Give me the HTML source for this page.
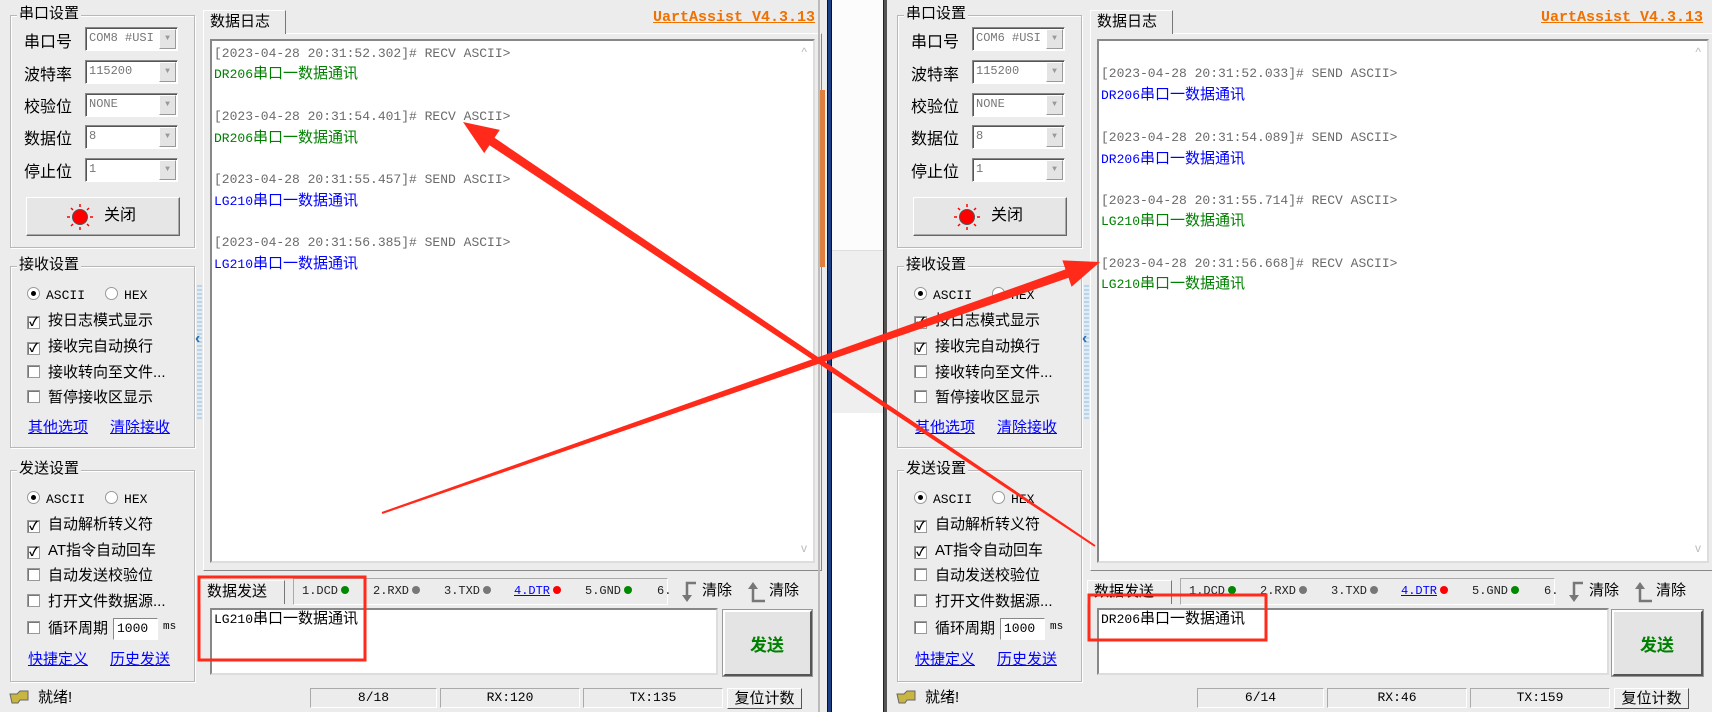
<!DOCTYPE html>
<html><head><meta charset="utf-8">
<style>
*{margin:0;padding:0;box-sizing:border-box}
body{width:1712px;height:712px;overflow:hidden;background:#fff;position:relative;font-family:"Liberation Sans","Noto Sans CJK SC",sans-serif;color:#000}
.a{position:absolute}
.win{position:absolute;top:0;height:712px;background:#ececec;overflow:hidden}
.gb{position:absolute;left:10px;width:185px;border:1px solid #b8b8b8;box-shadow:inset 1px 1px 0 #fff,1px 1px 0 #fff}
.gt{position:absolute;left:6px;top:-12px;background:#ececec;font-size:15px;line-height:20px;padding:0 2px}
.lbl{position:absolute;left:24px;font-size:16px;line-height:22px}
.cb{position:absolute;left:85px;width:93px;height:24px;background:#fff;border:1px solid #888;border-right-color:#fff;border-bottom-color:#fff;box-shadow:inset 1px 1px 0 #555;font-family:"Liberation Mono",monospace;font-size:12px;color:#777;line-height:21px;padding-left:3px;overflow:hidden;white-space:nowrap}
.cb i{position:absolute;right:1px;top:1px;width:17px;height:20px;background:#e4e4e4;border:1px solid #fff;border-right-color:#999;border-bottom-color:#999;font-style:normal;font-size:8px;color:#999;text-align:center;line-height:18px}
.row{position:absolute;left:27px;font-size:15px;line-height:20px;white-space:nowrap}
.chk{display:inline-block;width:13px;height:13px;background:#fff;border:1px solid #999;box-shadow:inset 1px 1px 0 #777;vertical-align:-1px;margin-right:8px;font-size:12px;line-height:11px;text-align:center;font-weight:bold}
.rad{display:inline-block;width:13px;height:13px;background:#fff;border:1px solid #999;border-radius:50%;vertical-align:-1px;margin-right:6px;position:relative}
.rad.on:after{content:"";position:absolute;left:3px;top:3px;width:5px;height:5px;border-radius:50%;background:#000}
.mono{font-family:"Liberation Mono",monospace;font-size:13px}
.lnk{position:absolute;font-size:15px;color:#0000ff;text-decoration:underline;line-height:20px}
.log{position:absolute;left:210px;top:39px;width:605px;height:524px;background:#fff;border:2px solid #888;border-right-color:#ddd;border-bottom-color:#ddd}
.ln{position:absolute;left:2px;font-family:"Liberation Mono",monospace;font-size:13px;line-height:18px;white-space:nowrap}
.ln b{font-weight:normal;font-family:"Liberation Sans","Noto Sans CJK SC",sans-serif;font-size:15px}
.ts{color:#6a6a6a}
.g{color:#008000}.bl{color:#0000ff}
.tab{position:absolute;background:#ececec;border:1px solid #fff;border-right-color:#777;border-bottom:none;font-size:15px;line-height:22px;padding-left:6px}
.seg{position:absolute;top:688px;height:20px;border:1px solid #aaa;border-right-color:#fff;border-bottom-color:#fff;font-family:"Liberation Mono",monospace;font-size:13px;text-align:center;line-height:18px}
.pin{position:absolute;top:583px;font-family:"Liberation Mono",monospace;font-size:12px;line-height:16px;color:#222;white-space:nowrap}
.dot{display:inline-block;width:8px;height:8px;border-radius:50%;margin-left:3px;vertical-align:0}
.title{position:absolute;top:9px;font-family:"Liberation Mono",monospace;font-weight:bold;font-size:15px;color:#f07000;text-decoration:underline}
</style></head><body>

<div class="a" style="left:832px;top:0;width:55px;height:250px;background:#fcfcfc"></div>
<div class="a" style="left:832px;top:250px;width:55px;height:163px;background:#efefef;border-top:1px solid #ddd"></div>
<div class="a" style="left:832px;top:413px;width:55px;height:299px;background:#fff"></div>

<!-- ===== LEFT WINDOW ===== -->
<div class="win" style="left:0;width:828px">
  <div class="gb" style="top:15px;height:233px"><div class="gt">串口设置</div></div>
  <div class="lbl" style="top:32px">串口号</div>
  <div class="lbl" style="top:65px">波特率</div>
  <div class="lbl" style="top:97px">校验位</div>
  <div class="lbl" style="top:129px">数据位</div>
  <div class="lbl" style="top:162px">停止位</div>
  <div class="cb" style="top:27px">COM8 #USI<i>▼</i></div>
  <div class="cb" style="top:60px">115200<i>▼</i></div>
  <div class="cb" style="top:93px">NONE<i>▼</i></div>
  <div class="cb" style="top:125px">8<i>▼</i></div>
  <div class="cb" style="top:158px">1<i>▼</i></div>
  <div class="a" style="left:26px;top:197px;width:154px;height:39px;border:1px solid #fff;border-right-color:#666;border-bottom-color:#666;box-shadow:inset -1px -1px 0 #aaa;background:#e6e6e6"></div>
  <svg class="a" style="left:66px;top:203px" width="28" height="28" viewBox="0 0 28 28"><circle cx="14" cy="14" r="7.5" fill="#f00" stroke="#555" stroke-width="1"/><g stroke="#f00" stroke-width="1.5"><path d="M14 1v3M14 24v3M1 14h3M24 14h3M5 5l2 2M21 21l2 2M23 5l-2 2M5 23l2-2"/></g></svg>
  <div class="a" style="left:104px;top:205px;font-size:16px;line-height:22px">关闭</div>

  <div class="gb" style="top:266px;height:182px"><div class="gt">接收设置</div></div>
  <div class="row" style="top:285px"><span class="rad on"></span><span class="mono">ASCII</span><span class="rad" style="margin-left:20px"></span><span class="mono">HEX</span></div>
  <div class="row" style="top:311px"><span class="chk">✓</span>按日志模式显示</div>
  <div class="row" style="top:337px"><span class="chk">✓</span>接收完自动换行</div>
  <div class="row" style="top:363px"><span class="chk"></span>接收转向至文件...</div>
  <div class="row" style="top:388px"><span class="chk"></span>暂停接收区显示</div>
  <div class="lnk" style="left:28px;top:418px">其他选项</div>
  <div class="lnk" style="left:110px;top:418px">清除接收</div>

  <div class="gb" style="top:470px;height:212px"><div class="gt">发送设置</div></div>
  <div class="row" style="top:489px"><span class="rad on"></span><span class="mono">ASCII</span><span class="rad" style="margin-left:20px"></span><span class="mono">HEX</span></div>
  <div class="row" style="top:515px"><span class="chk">✓</span>自动解析转义符</div>
  <div class="row" style="top:541px"><span class="chk">✓</span>AT指令自动回车</div>
  <div class="row" style="top:566px"><span class="chk"></span>自动发送校验位</div>
  <div class="row" style="top:592px"><span class="chk"></span>打开文件数据源...</div>
  <div class="row" style="top:619px"><span class="chk"></span>循环周期</div>
  <div class="a mono" style="left:113px;top:618px;width:45px;height:22px;background:#fff;border:1px solid #888;border-right-color:#fff;border-bottom-color:#fff;line-height:20px;padding-left:3px">1000</div>
  <div class="a mono" style="left:163px;top:621px;font-size:11px">ms</div>
  <div class="lnk" style="left:28px;top:650px">快捷定义</div>
  <div class="lnk" style="left:110px;top:650px">历史发送</div>

  <div class="a" style="left:197px;top:285px;width:5px;height:135px;background:repeating-linear-gradient(#bcd4e8 0 2px,#e0ecf6 2px 4px)"></div>
  <div class="a" style="left:195px;top:330px;color:#2a6fb0;font-size:16px;font-weight:bold">‹</div>

  <div class="a" style="left:203px;top:33px;width:619px;height:538px;border:1px solid #fff;border-right-color:#888;border-bottom-color:#888"></div>
  <div class="tab" style="left:203px;top:10px;width:83px;height:24px">数据日志</div>
  <div class="title" style="left:653px">UartAssist V4.3.13</div>
  <div class="log">
    <div class="ln ts" style="top:4px">[2023-04-28 20:31:52.302]# RECV ASCII&gt;</div>
    <div class="ln g" style="top:24px">DR206<b>串口一数据通讯</b></div>
    <div class="ln ts" style="top:67px">[2023-04-28 20:31:54.401]# RECV ASCII&gt;</div>
    <div class="ln g" style="top:88px">DR206<b>串口一数据通讯</b></div>
    <div class="ln ts" style="top:130px">[2023-04-28 20:31:55.457]# SEND ASCII&gt;</div>
    <div class="ln bl" style="top:151px">LG210<b>串口一数据通讯</b></div>
    <div class="ln ts" style="top:193px">[2023-04-28 20:31:56.385]# SEND ASCII&gt;</div>
    <div class="ln bl" style="top:214px">LG210<b>串口一数据通讯</b></div>
    <div class="a" style="right:6px;top:4px;color:#bbb;font-size:12px">^</div>
    <div class="a" style="right:6px;bottom:6px;color:#bbb;font-size:12px">v</div>
  </div>

  <div class="tab" style="left:200px;top:580px;width:85px;height:24px">数据发送</div>
  <div class="a" style="left:293px;top:578px;width:375px;height:27px;border:1px solid #aaa;border-right-color:#fff;border-bottom-color:#fff"></div>
  <div class="pin" style="left:302px">1.DCD<span class="dot" style="background:#080"></span></div>
  <div class="pin" style="left:373px">2.RXD<span class="dot" style="background:#777"></span></div>
  <div class="pin" style="left:444px">3.TXD<span class="dot" style="background:#777"></span></div>
  <div class="pin" style="left:514px"><u style="color:#00f">4.DTR</u><span class="dot" style="background:#f00"></span></div>
  <div class="pin" style="left:585px">5.GND<span class="dot" style="background:#080"></span></div>
  <div class="pin" style="left:657px">6.</div>
  <svg class="a" style="left:680px;top:580px" width="18" height="24"><path d="M16 3H7v14" fill="none" stroke="#777" stroke-width="2.5"/><path d="M2 15l5 7 5-7z" fill="#777"/></svg>
  <div class="a" style="left:702px;top:580px;font-size:15px;line-height:22px">清除</div>
  <svg class="a" style="left:746px;top:580px" width="20" height="24"><path d="M7 8v13h12" fill="none" stroke="#777" stroke-width="2.5"/><path d="M2 9l5-7 5 7z" fill="#777"/></svg>
  <div class="a" style="left:769px;top:580px;font-size:15px;line-height:22px">清除</div>
  <div class="a" style="left:210px;top:608px;width:508px;height:67px;background:#fff;border:2px solid #888;border-right-color:#ddd;border-bottom-color:#ddd"></div>
  <div class="a" style="left:214px;top:611px;font-family:'Liberation Mono',monospace;font-size:13px;line-height:18px">LG210<span style="font-size:15px">串口一数据通讯</span></div>
  <div class="a" style="left:723px;top:610px;width:89px;height:66px;border:2px solid #fff;border-right-color:#555;border-bottom-color:#555;outline:1px solid #999;background:#e4e4e4"></div>
  <div class="a" style="left:750px;top:631px;color:#008000;font-weight:bold;font-size:17px">发送</div>

  <svg class="a" style="left:8px;top:688px" width="22" height="18"><path d="M2 6h7l3-3h8v9h-8l-2 3H4z" fill="#c9b642" stroke="#666" stroke-width="1"/></svg>
  <div class="a" style="left:38px;top:687px;font-size:15px;line-height:22px">就绪!</div>
  <div class="seg" style="left:310px;width:127px">8/18</div>
  <div class="seg" style="left:440px;width:140px">RX:120</div>
  <div class="seg" style="left:583px;width:140px">TX:135</div>
  <div class="a" style="left:727px;top:688px;width:75px;height:21px;border:1px solid #fff;border-right-color:#555;border-bottom-color:#555;font-size:15px;line-height:19px;text-align:center">复位计数</div>
</div>
<div class="a" style="left:818px;top:0;width:2px;height:712px;background:#bbb"></div>
<div class="a" style="left:820px;top:90px;width:5px;height:177px;background:#e08040"></div>
<div class="a" style="left:827px;top:0;width:5px;height:712px;background:#1c3f86;border-left:1px solid #111;border-right:1px solid #111"></div>
<div class="a" style="left:883px;top:0;width:4px;height:712px;background:#555;border-left:1px solid #222"></div>

<!-- ===== RIGHT WINDOW ===== -->
<div class="win" style="left:887px;width:825px">
  <div class="gb" style="top:15px;height:233px"><div class="gt">串口设置</div></div>
  <div class="lbl" style="top:32px">串口号</div>
  <div class="lbl" style="top:65px">波特率</div>
  <div class="lbl" style="top:97px">校验位</div>
  <div class="lbl" style="top:129px">数据位</div>
  <div class="lbl" style="top:162px">停止位</div>
  <div class="cb" style="top:27px">COM6 #USI<i>▼</i></div>
  <div class="cb" style="top:60px">115200<i>▼</i></div>
  <div class="cb" style="top:93px">NONE<i>▼</i></div>
  <div class="cb" style="top:125px">8<i>▼</i></div>
  <div class="cb" style="top:158px">1<i>▼</i></div>
  <div class="a" style="left:26px;top:197px;width:154px;height:39px;border:1px solid #fff;border-right-color:#666;border-bottom-color:#666;box-shadow:inset -1px -1px 0 #aaa;background:#e6e6e6"></div>
  <svg class="a" style="left:66px;top:203px" width="28" height="28" viewBox="0 0 28 28"><circle cx="14" cy="14" r="7.5" fill="#f00" stroke="#555" stroke-width="1"/><g stroke="#f00" stroke-width="1.5"><path d="M14 1v3M14 24v3M1 14h3M24 14h3M5 5l2 2M21 21l2 2M23 5l-2 2M5 23l2-2"/></g></svg>
  <div class="a" style="left:104px;top:205px;font-size:16px;line-height:22px">关闭</div>

  <div class="gb" style="top:266px;height:182px"><div class="gt">接收设置</div></div>
  <div class="row" style="top:285px"><span class="rad on"></span><span class="mono">ASCII</span><span class="rad" style="margin-left:20px"></span><span class="mono">HEX</span></div>
  <div class="row" style="top:311px"><span class="chk">✓</span>按日志模式显示</div>
  <div class="row" style="top:337px"><span class="chk">✓</span>接收完自动换行</div>
  <div class="row" style="top:363px"><span class="chk"></span>接收转向至文件...</div>
  <div class="row" style="top:388px"><span class="chk"></span>暂停接收区显示</div>
  <div class="lnk" style="left:28px;top:418px">其他选项</div>
  <div class="lnk" style="left:110px;top:418px">清除接收</div>

  <div class="gb" style="top:470px;height:212px"><div class="gt">发送设置</div></div>
  <div class="row" style="top:489px"><span class="rad on"></span><span class="mono">ASCII</span><span class="rad" style="margin-left:20px"></span><span class="mono">HEX</span></div>
  <div class="row" style="top:515px"><span class="chk">✓</span>自动解析转义符</div>
  <div class="row" style="top:541px"><span class="chk">✓</span>AT指令自动回车</div>
  <div class="row" style="top:566px"><span class="chk"></span>自动发送校验位</div>
  <div class="row" style="top:592px"><span class="chk"></span>打开文件数据源...</div>
  <div class="row" style="top:619px"><span class="chk"></span>循环周期</div>
  <div class="a mono" style="left:113px;top:618px;width:45px;height:22px;background:#fff;border:1px solid #888;border-right-color:#fff;border-bottom-color:#fff;line-height:20px;padding-left:3px">1000</div>
  <div class="a mono" style="left:163px;top:621px;font-size:11px">ms</div>
  <div class="lnk" style="left:28px;top:650px">快捷定义</div>
  <div class="lnk" style="left:110px;top:650px">历史发送</div>

  <div class="a" style="left:197px;top:285px;width:5px;height:135px;background:repeating-linear-gradient(#bcd4e8 0 2px,#e0ecf6 2px 4px)"></div>
  <div class="a" style="left:195px;top:330px;color:#2a6fb0;font-size:16px;font-weight:bold">‹</div>

  <div class="a" style="left:203px;top:33px;width:625px;height:538px;border:1px solid #fff;border-right-color:#888;border-bottom-color:#888"></div>
  <div class="tab" style="left:203px;top:10px;width:83px;height:24px">数据日志</div>
  <div class="title" style="left:654px">UartAssist V4.3.13</div>
  <div class="log" style="width:612px">
    <div class="ln ts" style="top:24px">[2023-04-28 20:31:52.033]# SEND ASCII&gt;</div>
    <div class="ln bl" style="top:45px">DR206<b>串口一数据通讯</b></div>
    <div class="ln ts" style="top:88px">[2023-04-28 20:31:54.089]# SEND ASCII&gt;</div>
    <div class="ln bl" style="top:109px">DR206<b>串口一数据通讯</b></div>
    <div class="ln ts" style="top:151px">[2023-04-28 20:31:55.714]# RECV ASCII&gt;</div>
    <div class="ln g" style="top:171px">LG210<b>串口一数据通讯</b></div>
    <div class="ln ts" style="top:214px">[2023-04-28 20:31:56.668]# RECV ASCII&gt;</div>
    <div class="ln g" style="top:234px">LG210<b>串口一数据通讯</b></div>
    <div class="a" style="right:6px;top:4px;color:#bbb;font-size:12px">^</div>
    <div class="a" style="right:6px;bottom:6px;color:#bbb;font-size:12px">v</div>
  </div>

  <div class="tab" style="left:200px;top:580px;width:85px;height:24px">数据发送</div>
  <div class="a" style="left:293px;top:578px;width:375px;height:27px;border:1px solid #aaa;border-right-color:#fff;border-bottom-color:#fff"></div>
  <div class="pin" style="left:302px">1.DCD<span class="dot" style="background:#080"></span></div>
  <div class="pin" style="left:373px">2.RXD<span class="dot" style="background:#777"></span></div>
  <div class="pin" style="left:444px">3.TXD<span class="dot" style="background:#777"></span></div>
  <div class="pin" style="left:514px"><u style="color:#00f">4.DTR</u><span class="dot" style="background:#f00"></span></div>
  <div class="pin" style="left:585px">5.GND<span class="dot" style="background:#080"></span></div>
  <div class="pin" style="left:657px">6.</div>
  <svg class="a" style="left:680px;top:580px" width="18" height="24"><path d="M16 3H7v14" fill="none" stroke="#777" stroke-width="2.5"/><path d="M2 15l5 7 5-7z" fill="#777"/></svg>
  <div class="a" style="left:702px;top:580px;font-size:15px;line-height:22px">清除</div>
  <svg class="a" style="left:746px;top:580px" width="20" height="24"><path d="M7 8v13h12" fill="none" stroke="#777" stroke-width="2.5"/><path d="M2 9l5-7 5 7z" fill="#777"/></svg>
  <div class="a" style="left:769px;top:580px;font-size:15px;line-height:22px">清除</div>
  <div class="a" style="left:210px;top:608px;width:512px;height:67px;background:#fff;border:2px solid #888;border-right-color:#ddd;border-bottom-color:#ddd"></div>
  <div class="a" style="left:214px;top:611px;font-family:'Liberation Mono',monospace;font-size:13px;line-height:18px">DR206<span style="font-size:15px">串口一数据通讯</span></div>
  <div class="a" style="left:725px;top:610px;width:91px;height:66px;border:2px solid #fff;border-right-color:#555;border-bottom-color:#555;outline:1px solid #999;background:#e4e4e4"></div>
  <div class="a" style="left:753px;top:631px;color:#008000;font-weight:bold;font-size:17px">发送</div>

  <svg class="a" style="left:8px;top:688px" width="22" height="18"><path d="M2 6h7l3-3h8v9h-8l-2 3H4z" fill="#c9b642" stroke="#666" stroke-width="1"/></svg>
  <div class="a" style="left:38px;top:687px;font-size:15px;line-height:22px">就绪!</div>
  <div class="seg" style="left:310px;width:127px">6/14</div>
  <div class="seg" style="left:440px;width:140px">RX:46</div>
  <div class="seg" style="left:583px;width:140px">TX:159</div>
  <div class="a" style="left:727px;top:688px;width:75px;height:21px;border:1px solid #fff;border-right-color:#555;border-bottom-color:#555;font-size:15px;line-height:19px;text-align:center">复位计数</div>
</div>

<svg class="a" style="left:0;top:0" width="1712" height="712">
  <rect x="199" y="577" width="166" height="83" fill="none" stroke="#ff2a1a" stroke-width="3"/>
  <rect x="1089" y="595" width="177" height="45" fill="none" stroke="#ff2a1a" stroke-width="3"/>
  <polygon fill="#ff2a1a" points="463,122 499.8,129.9 494.5,137.8 1095.6,545.2 1094.4,546.8 489.5,145.2 484.2,153.1"/>
  <polygon fill="#ff2a1a" points="1100,262 1071.6,286.8 1068.5,277.8 382.3,514 381.7,512 1065.5,269.4 1062.4,260.4"/>
</svg>
</body></html>
